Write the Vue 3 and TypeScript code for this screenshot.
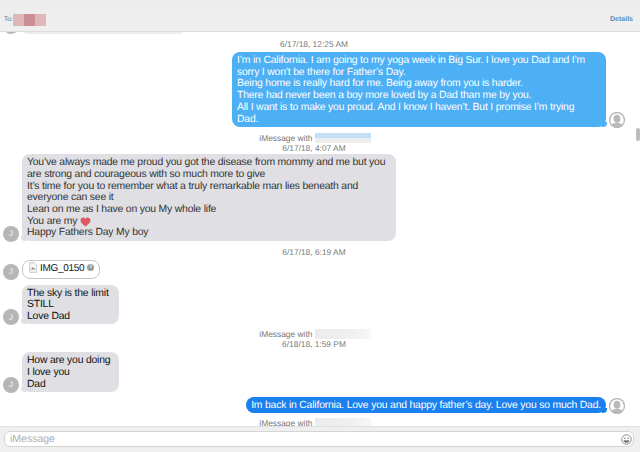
<template>
  <div class="window">
    <header class="to-bar">
      <span class="to-label">To:</span>
      <span class="to-blur"><i></i><i class="dark"></i><i></i></span>
      <a class="details">Details</a>
    </header>

    <main class="transcript">
      <div class="clipped">
        <span class="avatar them">J</span>
        <div class="clipped-bubble"></div>
      </div>

      <template v-for="item in items" :key="item.id">
        <div v-if="item.kind === 'stamp'" class="stamp" :class="item.cls">
          <div v-if="item.service" class="service">
            iMessage with <span class="redact" :class="{ bluish: item.bluish }"></span>
          </div>
          <div v-if="item.time">{{ item.time }}</div>
        </div>
        <div v-else-if="item.kind === 'them'" class="row" :class="item.cls">
          <span class="avatar them">J</span>
          <div class="bubble grey" :class="item.bubble">
            <template v-for="(line, i) in item.lines" :key="i">
              <div>{{ line }}</div>
            </template>
            <template v-if="item.heart">
              <div>You are my
                <svg class="heart" viewBox="0 0 24 22"><path d="M12 21C5 15.500 1 11.500 1 7a5.800 5.800 0 0 1 11-2.500A5.800 5.800 0 0 1 23 7c0 4.500-4 8.500-11 14z" /></svg>
              </div>
              <div>Happy Fathers Day My boy</div>
            </template>
          </div>
        </div>
        <div v-else-if="item.kind === 'attachment'" class="row" :class="item.cls">
          <span class="avatar them">J</span>
          <div class="bubble attachment">
            <svg class="file" viewBox="0 0 10 13"><path d="M1 .5h5.500L9.500 3.500v9H1z" fill="#f7f7f7" stroke="#a8a8a8" stroke-width=".8" /><path d="M3 8l1.500-2 1 1.500.7-.8L8 9H3z" fill="#8a8a8a" /></svg>
            <span>IMG_0150</span>
            <span class="info">i</span>
          </div>
        </div>
        <div v-else class="row me" :class="item.cls">
          <div class="bubble" :class="item.bubble">
            <template v-for="(line, i) in item.lines" :key="i">
              <div>{{ line }}</div>
            </template>
          </div>
          <span class="avatar mine">
            <svg viewBox="0 0 16 16"><circle cx="8" cy="8" r="8" fill="#b4b4b4" /><circle cx="8" cy="8" r="6.800" fill="#fff" /><ellipse cx="8" cy="6.800" rx="3.400" ry="4" fill="#b9b9b9" /><path d="M2.600 12.800C4 11.200 6 11 8 11s4 .2 5.400 1.800A6.800 6.800 0 0 1 2.600 12.800z" fill="#b9b9b9" /></svg>
          </span>
        </div>
      </template>

      <div class="scroll-thumb"></div>
    </main>

    <footer class="composer">
      <div class="field">
        <span class="placeholder">iMessage</span>
        <svg class="emoji" viewBox="0 0 12 12"><circle cx="6" cy="6" r="5.200" fill="none" stroke="#777" stroke-width=".9" /><circle cx="4.200" cy="4.700" r=".8" fill="#777" /><circle cx="7.800" cy="4.700" r=".8" fill="#777" /><path d="M2.800 6.700h6.400C9 8.600 7.600 9.500 6 9.500S3 8.600 2.800 6.700z" fill="#777" /></svg>
      </div>
    </footer>
  </div>
</template>

<script setup lang="ts">
interface Item {
  id: number
  kind: 'stamp' | 'them' | 'me' | 'attachment'
  cls?: string
  bubble?: string
  time?: string
  service?: boolean
  bluish?: boolean
  heart?: boolean
  lines?: string[]
}

const items: Item[] = [
  { id: 1, kind: 'stamp', time: '6/17/18, 12:25 AM', cls: 'first' },
  {
    id: 2,
    kind: 'me',
    bubble: 'light wide',
    lines: [
      'I’m in California. I am going to my yoga week in Big Sur. I love you Dad and I’m',
      'sorry I won’t be there for Father’s Day.',
      'Being home is really hard for me. Being away from you is harder.',
      'There had never been a boy more loved by a Dad than me by you.',
      'All I want is to make you proud. And I know I haven’t. But I promise I’m trying',
      'Dad.'
    ]
  },
  { id: 3, kind: 'stamp', service: true, bluish: true, time: '6/17/18, 4:07 AM', cls: 'tight' },
  {
    id: 4,
    kind: 'them',
    bubble: 'wide',
    heart: true,
    lines: [
      'You’ve always made me proud you got the disease from mommy and me but you',
      'are strong and courageous with so much more to give',
      'It’s time for you to remember what a truly remarkable man lies beneath and',
      'everyone can see it',
      'Lean on me as I have on you My whole life'
    ]
  },
  { id: 5, kind: 'stamp', time: '6/17/18, 6:19 AM' },
  { id: 6, kind: 'attachment' },
  { id: 7, kind: 'them', bubble: 'short', cls: 'before-stamp', lines: ['The sky is the limit', 'STILL', 'Love Dad'] },
  { id: 8, kind: 'stamp', service: true, time: '6/18/18, 1:59 PM', cls: 'after-grey' },
  { id: 9, kind: 'them', bubble: 'short', cls: 'before-me', lines: ['How are you doing', 'I love you', 'Dad'] },
  {
    id: 10,
    kind: 'me',
    bubble: 'strong',
    lines: ['Im back in California. Love you and happy father’s day. Love you so much Dad.']
  },
  { id: 11, kind: 'stamp', service: true, cls: 'last' }
]
</script>

<style>
html,
body {
  margin: 0;
  background: #fff;
}
</style>

<style scoped>
.window {
  width: 640px;
  height: 452px;
  display: flex;
  flex-direction: column;
  overflow: hidden;
  background: #fff;
  font-family: "Liberation Sans", Arial, sans-serif;
  text-rendering: geometricPrecision;
}

.to-bar {
  height: 32px;
  flex: none;
  box-sizing: border-box;
  display: flex;
  align-items: flex-end;
  padding: 0 7px 6px 4px;
  background: linear-gradient(#ececec, #f0f0f0);
  border-bottom: 1px solid #dcdcdc;
  font-size: 7px;
  color: #666;
}

.to-label {
  line-height: 10px;
  font-size: 6.500px;
}

.to-blur {
  display: flex;
  margin: 0 0 -1px 0;
  height: 12px;
  filter: blur(0.7px);
}

.to-blur i {
  width: 11px;
  background: #dfb6ba;
}

.to-blur i.dark {
  background: #c98f95;
}

.details {
  margin-left: auto;
  color: #5b8db8;
  font-weight: 700;
  line-height: 10px;
}

.transcript {
  flex: 1;
  min-height: 0;
  position: relative;
  overflow: hidden;
  box-sizing: border-box;
  padding: 0 15px 0 3px;
}

.clipped {
  height: 2px;
  overflow: hidden;
  display: flex;
  align-items: flex-end;
  gap: 3px;
}

.clipped-bubble {
  width: 163px;
  height: 10px;
  flex: none;
  border-radius: 0 0 6px 6px;
  background: #ececee;
}

.clipped .avatar {
  margin-bottom: 0;
}

.stamp {
  text-align: center;
  font-size: 8.400px;
  line-height: 10px;
  color: #787878;
  margin: 6px 0 3px;
}

.stamp.first {
  margin-top: 5px;
}

.stamp.tight {
  margin: 6px 0 1.500px;
}

.stamp.after-grey,
.stamp.last {
  margin-top: 5px;
}

.service {
  white-space: nowrap;
}

.redact {
  display: inline-block;
  width: 56px;
  height: 10px;
  vertical-align: -2px;
  margin-right: -2px;
  background: linear-gradient(90deg, #ececec, #f0f0f0 70%, #f8f8f8);
}

.redact.bluish {
  background: linear-gradient(#c4e0f7 50%, #eeeeee 50%);
  filter: blur(0.5px);
}

.row {
  display: flex;
  align-items: flex-end;
  gap: 3px;
  margin-bottom: 6px;
}

.row.before-stamp {
  margin-bottom: 0;
}

.row.before-me {
  margin-bottom: 5px;
}

.row.me {
  justify-content: flex-end;
  margin-bottom: 0;
}

.avatar {
  width: 16px;
  height: 16px;
  flex: none;
  border-radius: 50%;
  display: flex;
  align-items: center;
  justify-content: center;
  margin-bottom: -1px;
  background: #b6b6b6;
  color: #e4e4e4;
  font-size: 8px;
  font-weight: 700;
}

.avatar.mine {
  overflow: hidden;
}

.avatar.mine svg {
  width: 16px;
  height: 16px;
  flex: none;
}

.bubble {
  position: relative;
  box-sizing: border-box;
  padding: 3px 5px 1.500px;
  border-radius: 8px;
  font-size: 10.400px;
  letter-spacing: -0.19px;
  line-height: 11.700px;
  white-space: nowrap;
  color: #fff;
}

.bubble.light {
  background: #4db0f5;
}

.bubble.strong {
  background: #1a80ee;
}

.bubble.grey {
  background: #dfdfe4;
  color: #333;
}

.bubble.wide {
  width: 374px;
}

.bubble.short {
  width: 97px;
  color: #111;
}

.bubble.attachment {
  display: flex;
  align-items: center;
  height: 19px;
  width: 78px;
  padding: 0 0 0 6px;
  background: #fff;
  border: 1px solid #c6c6c6;
  color: #111;
  font-size: 10px;
  letter-spacing: -0.3px;
}

.row.me .bubble {
  flex: none;
}

.row .bubble::after {
  content: "";
  position: absolute;
  bottom: 0;
  width: 5px;
  height: 5px;
  background: inherit;
}

.row:not(.me) .bubble::after {
  left: -1px;
  border-bottom-left-radius: 4px;
}

.row.me .bubble::after {
  right: -1px;
  border-bottom-right-radius: 4px;
}

.bubble.attachment::after {
  display: none;
}

.heart {
  width: 11px;
  height: 10px;
  vertical-align: top;
  margin-top: 1px;
  fill: #dd5a62;
}

.file {
  width: 8px;
  height: 11px;
  margin-right: 3px;
  flex: none;
  align-self: flex-start;
  margin-top: 1px;
}

.info {
  width: 7px;
  height: 7px;
  margin: -4px 0 0 3px;
  border-radius: 50%;
  background: #9a9a9a;
  color: #fff;
  font-size: 5.500px;
  line-height: 7px;
  text-align: center;
  font-weight: 700;
  letter-spacing: 0;
}

.scroll-thumb {
  position: absolute;
  right: 0;
  top: 96px;
  width: 4px;
  height: 13px;
  border-radius: 2px;
  background: #bdbdbd;
}

.composer {
  height: 26px;
  flex: none;
  box-sizing: border-box;
  padding: 4px 6px 5px 4px;
  background: #efefef;
  border-top: 1px solid #e0e0e0;
}

.field {
  height: 16px;
  box-sizing: border-box;
  display: flex;
  align-items: center;
  justify-content: space-between;
  padding: 0 1px 0 5px;
  background: #fff;
  border: 1px solid #d4d4d4;
  border-radius: 6px;
}

.placeholder {
  font-size: 10.500px;
  color: #aeaeae;
}

.emoji {
  width: 11px;
  height: 11px;
}
</style>
